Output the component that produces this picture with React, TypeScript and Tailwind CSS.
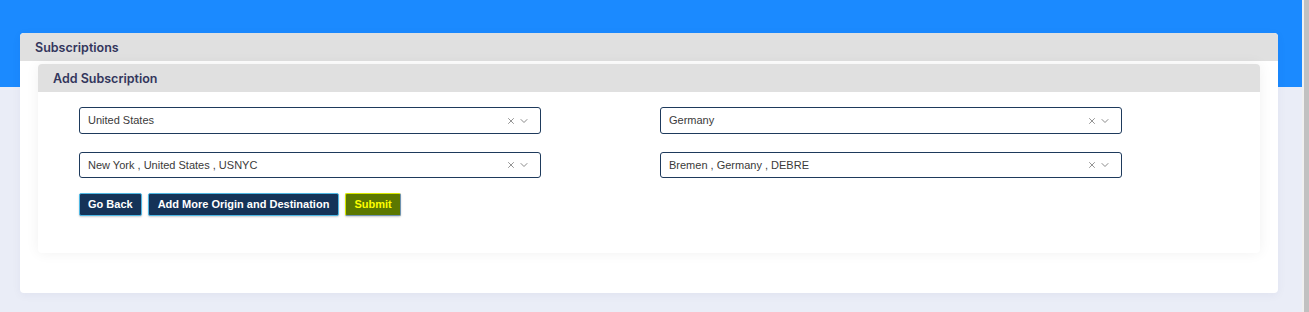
import { ChevronDown, X } from "lucide-react";

interface SelectBoxProps {
  value: string;
}

function SelectBox({ value }: SelectBoxProps) {
  return (
    <div className="flex w-[462px] items-center rounded-[3px] border border-[#1e3a5c] bg-white pl-[8px] pr-[10px] font-['Liberation_Sans',Arial,sans-serif] text-[11px] text-[#3a3a3a]">
      <span className="flex-1 truncate">{value}</span>
      <X className="h-[10px] w-[10px] text-[#8a8a8a]" strokeWidth={2.2} />
      <ChevronDown className="ml-[2px] h-[12px] w-[12px] text-[#8a8a8a]" strokeWidth={2} />
    </div>
  );
}

export default function App() {
  return (
    <div className="flex h-[312px] w-full overflow-hidden">
      <main className="flex-1 bg-[linear-gradient(to_bottom,#1b8aff_87px,#eaedf7_87px)] pt-[33px] font-['Inter',sans-serif]">
        <section className="ml-[20px] mr-[24px] h-[260px] rounded-[4px] bg-white shadow-[0_2px_10px_rgba(30,40,90,0.05)]">
          <header className="flex h-[28px] items-center rounded-t-[4px] bg-[#e0e0e0] pl-[15px] pt-[2px] text-[12.5px] font-semibold text-[#33365c]">
            Subscriptions
          </header>

          <div className="px-[18px] pt-[3px]">
            <div className="h-[189px] rounded-[4px] bg-white shadow-[0_0_14px_rgba(0,0,0,0.06)]">
              <header className="flex h-[28px] items-center rounded-t-[4px] bg-[#e0e0e0] pl-[15px] pt-[2px] text-[12.5px] font-semibold text-[#33365c]">
                Add Subscription
              </header>

              <div className="pl-[41px] pt-[15px]">
                <div className="grid grid-cols-[462px_462px] gap-x-[119px] gap-y-[18px]">
                  <div className="flex h-[27px]">
                    <SelectBox value="United States" />
                  </div>
                  <div className="flex h-[27px]">
                    <SelectBox value="Germany" />
                  </div>
                  <div className="flex h-[26px]">
                    <SelectBox value="New York , United States , USNYC" />
                  </div>
                  <div className="flex h-[26px]">
                    <SelectBox value="Bremen , Germany , DEBRE" />
                  </div>
                </div>

                <div className="mt-[15px] flex gap-[6px] font-['Liberation_Sans',Arial,sans-serif] text-[11px] font-bold">
                  <button className="h-[23px] rounded-[2px] border border-[#4fb8e4] bg-[#153358] px-[8px] text-white shadow-[0_1px_2px_rgba(0,0,0,0.2)]">
                    Go Back
                  </button>
                  <button className="h-[23px] rounded-[2px] border border-[#4fb8e4] bg-[#153358] px-[9px] text-white shadow-[0_1px_2px_rgba(0,0,0,0.2)]">
                    Add More Origin and Destination
                  </button>
                  <button className="h-[23px] rounded-[2px] border border-[#6f93b0] border-t-[#d8e800] border-l-[#d8e800] bg-[#5c7800] px-[8px] text-[#ffff00] shadow-[0_1px_2px_rgba(0,0,0,0.2)]">
                    Submit
                  </button>
                </div>
              </div>
            </div>
          </div>
        </section>
      </main>
      <div className="w-[7px] border-l-2 border-[#f0f0f0] bg-[#c1c1c1]" />
    </div>
  );
}
